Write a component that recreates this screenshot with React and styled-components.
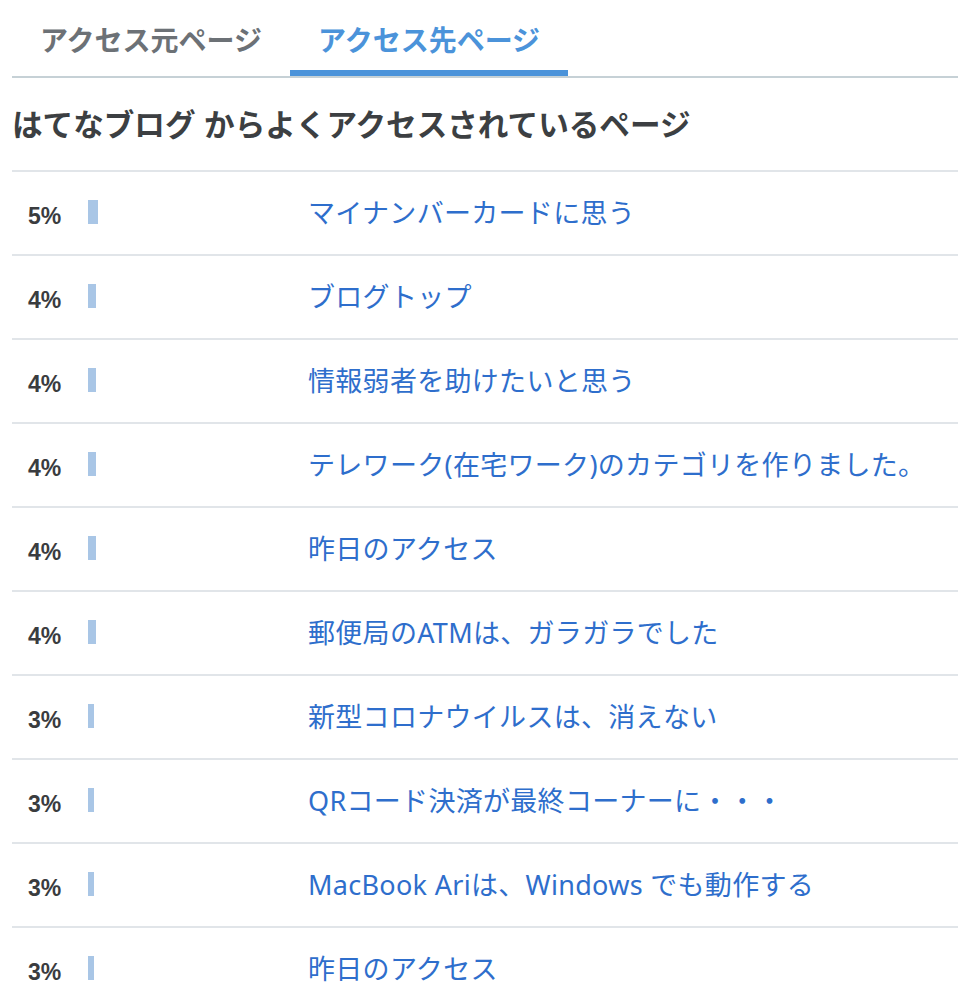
import React, { useState } from 'react';
import styled, { createGlobalStyle } from 'styled-components';

const GlobalStyle = createGlobalStyle`
  body {
    margin: 0;
    background: #fff;
    font-family: 'Liberation Sans', 'Noto Sans CJK JP', sans-serif;
  }
`;

const Container = styled.div`
  margin-left: 12px;
`;

const TabList = styled.div`
  display: flex;
  border-bottom: 2px solid #c6d1d6;
`;

const Tab = styled.div`
  padding: 22px 28px 8px;
  line-height: 40px;
  font-size: 28px;
  font-weight: 700;
  color: ${({ active }) => (active ? '#4b93da' : '#6c7176')};
  border-bottom: 6px solid ${({ active }) => (active ? '#4b93da' : 'transparent')};
  cursor: pointer;
`;

const Heading = styled.h2`
  margin: 25px 0 22px;
  font-size: 30.6px;
  line-height: 45px;
  font-weight: 700;
  color: #3c3f42;
`;

const List = styled.div`
  display: flex;
  flex-direction: column;
`;

const Row = styled.div`
  display: grid;
  grid-template-columns: 60px 220px 1fr;
  align-items: center;
  height: 82px;
  padding-left: 16px;
  border-top: 2px solid #e1e5e9;
`;

const Percent = styled.span`
  font-size: 23px;
  font-weight: 700;
  color: #3a3c3f;
  padding-top: 6px;
`;

const Bar = styled.div`
  height: 24px;
  background-color: #a9c6e6;
  margin-top: -2px;
`;

const Link = styled.a`
  font-family: 'Noto Sans', 'Noto Sans CJK JP', sans-serif;
  font-size: 27px;
  letter-spacing: 0.3px;
  color: #2e6ecc;
  text-decoration: none;
  white-space: nowrap;
  margin-top: -4px;
`;

const pages = [
  { pct: 5, title: 'マイナンバーカードに思う' },
  { pct: 4, title: 'ブログトップ' },
  { pct: 4, title: '情報弱者を助けたいと思う' },
  { pct: 4, title: 'テレワーク(在宅ワーク)のカテゴリを作りました。' },
  { pct: 4, title: '昨日のアクセス' },
  { pct: 4, title: '郵便局のATMは、ガラガラでした' },
  { pct: 3, title: '新型コロナウイルスは、消えない' },
  { pct: 3, title: 'QRコード決済が最終コーナーに・・・' },
  { pct: 3, title: 'MacBook Ariは、Windows でも動作する' },
  { pct: 3, title: '昨日のアクセス' },
];

const App = () => {
  const [tab, setTab] = useState(1);

  return (
    <Container>
      <GlobalStyle />
      <TabList>
        <Tab active={tab === 0} onClick={() => setTab(0)}>アクセス元ページ</Tab>
        <Tab active={tab === 1} onClick={() => setTab(1)}>アクセス先ページ</Tab>
      </TabList>
      <Heading>はてなブログ からよくアクセスされているページ</Heading>
      <List>
        {pages.map((page, index) => (
          <Row key={index}>
            <Percent>{page.pct}%</Percent>
            <div>
              <Bar style={{ width: page.pct * 2 }} />
            </div>
            <Link href="#">{page.title}</Link>
          </Row>
        ))}
      </List>
    </Container>
  );
};

export default App;
